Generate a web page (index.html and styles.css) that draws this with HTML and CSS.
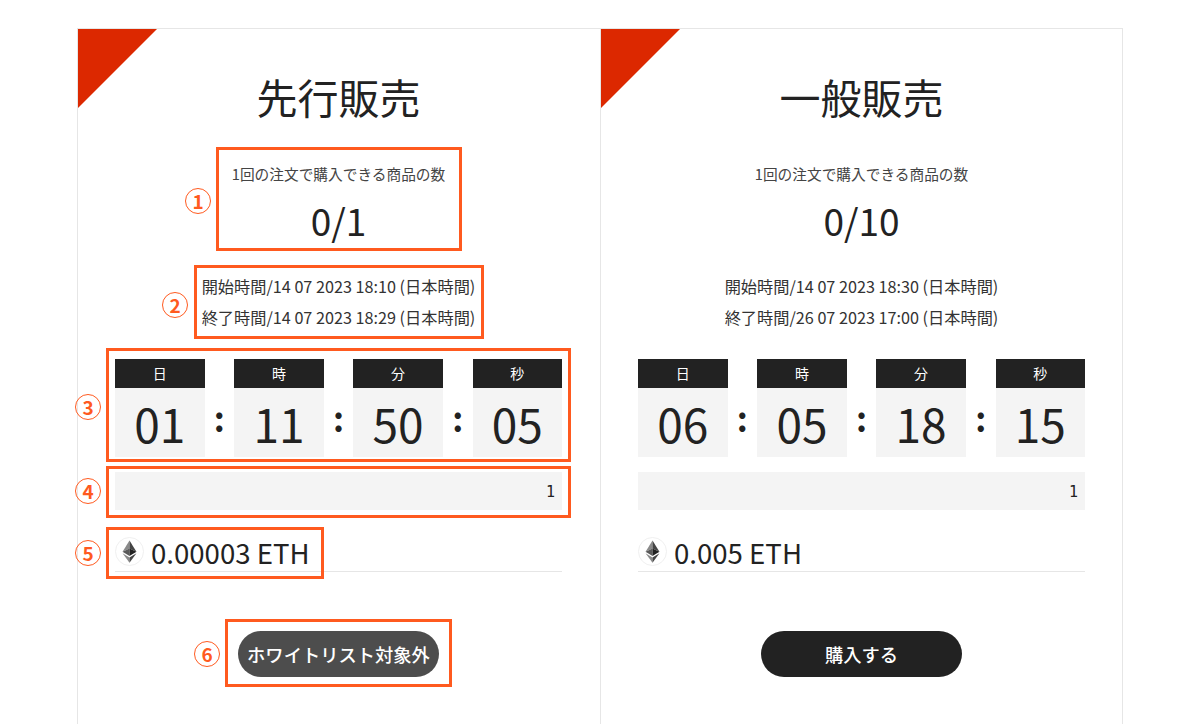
FILE: index.html
```html
<!DOCTYPE html>
<html lang="ja">
<head>
<meta charset="utf-8">
<title>販売</title>
<link rel="stylesheet" href="styles.css">
</head>
<body>
<main class="page">
  <section class="card card-left">
    <div class="corner"></div>
    <h2 class="title">先行販売</h2>
    <p class="limit-label">1回の注文で購入できる商品の数</p>
    <p class="limit-value">0/1</p>
    <div class="times">
      <p>開始時間/14 07 2023 18:10 (日本時間)</p>
      <p>終了時間/14 07 2023 18:29 (日本時間)</p>
    </div>
    <div class="countdown">
      <div class="unit"><div class="unit-head">日</div><div class="unit-body">01</div></div>
      <div class="sep">:</div>
      <div class="unit"><div class="unit-head">時</div><div class="unit-body">11</div></div>
      <div class="sep">:</div>
      <div class="unit"><div class="unit-head">分</div><div class="unit-body">50</div></div>
      <div class="sep">:</div>
      <div class="unit"><div class="unit-head">秒</div><div class="unit-body">05</div></div>
    </div>
    <div class="qty">1</div>
    <div class="price">
      <svg class="eth" viewBox="0 0 30 30" aria-hidden="true">
        <circle cx="15" cy="15" r="14.5" fill="#fff" stroke="#eeeeee"/>
        <path d="M15 3.5 L7.8 15.3 L15 11.9 Z" fill="#8a8a8a"/>
        <path d="M15 3.5 L22.2 15.3 L15 11.9 Z" fill="#454545"/>
        <path d="M7.8 15.3 L15 19.6 L15 11.9 Z" fill="#5a5a5a"/>
        <path d="M22.2 15.3 L15 19.6 L15 11.9 Z" fill="#222222"/>
        <path d="M7.8 16.8 L15 26.6 L15 21.1 Z" fill="#8a8a8a"/>
        <path d="M22.2 16.8 L15 26.6 L15 21.1 Z" fill="#454545"/>
      </svg>
      <span class="price-text">0.00003 ETH</span>
    </div>
    <div class="actions"><button class="buy buy-off" type="button">ホワイトリスト対象外</button></div>
  </section>

  <section class="card">
    <div class="corner"></div>
    <h2 class="title">一般販売</h2>
    <p class="limit-label">1回の注文で購入できる商品の数</p>
    <p class="limit-value">0/10</p>
    <div class="times">
      <p>開始時間/14 07 2023 18:30 (日本時間)</p>
      <p>終了時間/26 07 2023 17:00 (日本時間)</p>
    </div>
    <div class="countdown">
      <div class="unit"><div class="unit-head">日</div><div class="unit-body">06</div></div>
      <div class="sep">:</div>
      <div class="unit"><div class="unit-head">時</div><div class="unit-body">05</div></div>
      <div class="sep">:</div>
      <div class="unit"><div class="unit-head">分</div><div class="unit-body">18</div></div>
      <div class="sep">:</div>
      <div class="unit"><div class="unit-head">秒</div><div class="unit-body">15</div></div>
    </div>
    <div class="qty">1</div>
    <div class="price">
      <svg class="eth" viewBox="0 0 30 30" aria-hidden="true">
        <circle cx="15" cy="15" r="14.5" fill="#fff" stroke="#eeeeee"/>
        <path d="M15 3.5 L7.8 15.3 L15 11.9 Z" fill="#8a8a8a"/>
        <path d="M15 3.5 L22.2 15.3 L15 11.9 Z" fill="#454545"/>
        <path d="M7.8 15.3 L15 19.6 L15 11.9 Z" fill="#5a5a5a"/>
        <path d="M22.2 15.3 L15 19.6 L15 11.9 Z" fill="#222222"/>
        <path d="M7.8 16.8 L15 26.6 L15 21.1 Z" fill="#8a8a8a"/>
        <path d="M22.2 16.8 L15 26.6 L15 21.1 Z" fill="#454545"/>
      </svg>
      <span class="price-text">0.005 ETH</span>
    </div>
    <div class="actions"><button class="buy" type="button">購入する</button></div>
  </section>

  <div class="mark mark-1"></div>
  <div class="mark mark-2"></div>
  <div class="mark mark-3"></div>
  <div class="mark mark-4"></div>
  <div class="mark mark-5"></div>
  <div class="mark mark-6"></div>
  <span class="num num-1">1</span>
  <span class="num num-2">2</span>
  <span class="num num-3">3</span>
  <span class="num num-4">4</span>
  <span class="num num-5">5</span>
  <span class="num num-6">6</span>
</main>
</body>
</html>
```
FILE: styles.css
```css
* { box-sizing: border-box; }
html, body { margin: 0; height: 724px; overflow: hidden; background: #fff; }
body { font-family: "Noto Sans CJK JP", "Noto Sans", sans-serif; color: #222; }
p, h2 { margin: 0; }

.page {
  position: relative;
  height: 724px;
  overflow: hidden;
  padding: 28px 0 0 77px;
  display: flex;
  align-items: flex-start;
}
.card {
  position: relative;
  flex: none;
  width: 523px;
  height: 696px;
  overflow: hidden;
  padding: 0 37px;
  border: 1px solid #e6e6e6;
  border-bottom: 0;
  text-align: center;
}
.card-left { border-right: 0; padding-right: 38px; }
.corner {
  position: absolute;
  left: 0;
  top: 0;
  width: 79px;
  height: 79px;
  background: #dc2800;
  clip-path: polygon(0 0, 100% 0, 0 100%);
}
.title {
  padding-top: 36px;
  font-size: 41px;
  line-height: 62px;
  font-weight: 400;
}
.limit-label {
  margin-top: 37px;
  font-size: 14.7px;
  line-height: 20px;
  color: #444;
}
.limit-value {
  margin-top: 10px;
  font-size: 37px;
  line-height: 52px;
}
.times {
  margin-top: 25px;
  font-size: 16.2px;
  line-height: 31px;
  color: #333;
}
.countdown {
  margin-top: 26px;
  display: flex;
  justify-content: space-between;
}
.unit { width: 89.5px; }
.unit-head {
  height: 29px;
  background: #222;
  color: #fff;
  font-size: 14px;
  line-height: 29px;
}
.unit-body {
  height: 69px;
  background: #f4f4f4;
  font-size: 46px;
  line-height: 71px;
}
.sep {
  flex: 1;
  font-size: 34px;
  line-height: 68px;
  padding-top: 25px;
  font-weight: 700;
}
.qty {
  margin-top: 15px;
  height: 38px;
  background: #f4f4f4;
  padding-right: 7px;
  text-align: right;
  font-family: "DejaVu Sans Mono", monospace;
  font-size: 15px;
  line-height: 40px;
}
.price {
  margin-top: 24px;
  height: 38px;
  display: flex;
  align-items: flex-start;
  gap: 7px;
  border-bottom: 1px solid #e6e6e6;
}
.eth { width: 29px; height: 29px; flex: none; margin-top: 3px; }
.price-text { font-size: 27.6px; line-height: 36px; white-space: nowrap; }
.actions { margin-top: 59px; display: flex; justify-content: center; }
.buy {
  width: 201px;
  height: 46px;
  border: 0;
  border-radius: 23px;
  background: #222;
  color: #fff;
  font-family: inherit;
  font-size: 18.3px;
  font-weight: 500;
  padding: 0;
  white-space: nowrap;
}
.buy-off { background: #4d4d4d; }

.mark { position: absolute; border: 3px solid #ff5a1f; }
.mark-1 { left: 216px; top: 147px; width: 246px; height: 104px; }
.mark-2 { left: 194px; top: 265px; width: 290px; height: 74px; }
.mark-3 { left: 106px; top: 348px; width: 465px; height: 114px; }
.mark-4 { left: 106px; top: 466px; width: 465px; height: 52px; }
.mark-5 { left: 106px; top: 527px; width: 218px; height: 52px; }
.mark-6 { left: 225px; top: 619px; width: 227px; height: 68px; }

.num {
  position: absolute;
  width: 26px;
  height: 26px;
  border: 1px solid #ff5a1f;
  border-radius: 50%;
  color: #ff5a1f;
  font-size: 19px;
  font-weight: 700;
  line-height: 23px;
  text-align: center;
}
.num-1 { left: 185px; top: 188px; }
.num-2 { left: 162px; top: 292px; }
.num-3 { left: 75px; top: 394px; }
.num-4 { left: 75px; top: 478px; }
.num-5 { left: 75px; top: 540px; }
.num-6 { left: 194px; top: 641px; }
```
